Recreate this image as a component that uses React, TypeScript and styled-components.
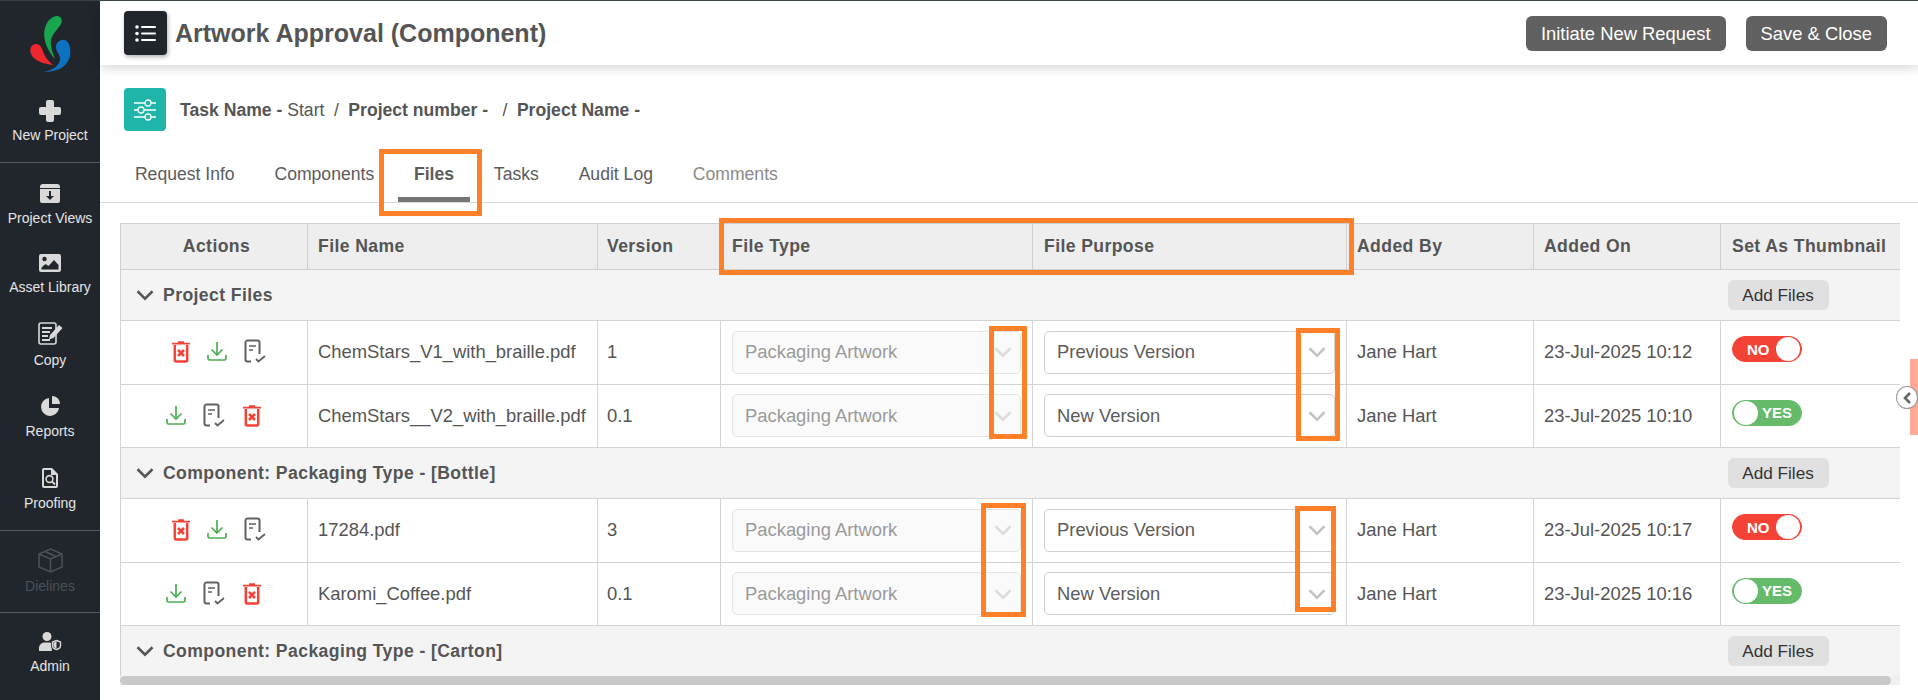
import styled, { createGlobalStyle } from 'styled-components'
import { ReactNode } from 'react'

const GlobalStyle = createGlobalStyle`
  html, body {
    margin: 0;
    padding: 0;
    height: 700px;
    overflow: hidden;
    background: #fff;
    font-family: 'Liberation Sans', Arial, sans-serif;
    color: #555;
  }
  * { box-sizing: border-box; }
`

const Page = styled.div`
  position: relative;
  display: flex;
  width: 1918px;
  height: 700px;
  overflow: hidden;
  border-top: 1px solid #36423f;
`

const Sidebar = styled.aside`
  width: 100px;
  flex: none;
  background: #21262d;
  display: flex;
  flex-direction: column;
  color: #e4e4e4;
`

const LogoWrap = styled.div`
  height: 83px;
  padding-top: 13px;
  display: flex;
  justify-content: center;
`

const NavGroup = styled.div<{ $height: number; $last?: boolean }>`
  height: ${(p) => p.$height}px;
  border-bottom: ${(p) => (p.$last ? 'none' : '1px solid #555a60')};
`

const NavItem = styled.div<{ $height: number; $disabled?: boolean; $gap: number }>`
  height: ${(p) => p.$height}px;
  display: flex;
  flex-direction: column;
  align-items: center;
  justify-content: flex-end;
  font-size: 14px;
  line-height: 16px;
  white-space: nowrap;
  color: ${(p) => (p.$disabled ? '#4c5157' : '#e4e4e4')};

  svg {
    margin-bottom: ${(p) => p.$gap}px;
  }
`

const Main = styled.main`
  flex: 1;
  min-width: 0;
  display: flex;
  flex-direction: column;
`

const TopBar = styled.header`
  height: 64px;
  flex: none;
  display: flex;
  align-items: center;
  padding: 0 31px 0 24px;
  box-shadow: 0 3px 10px rgba(0, 0, 0, 0.16);
  position: relative;
`

const MenuButton = styled.div`
  width: 43px;
  height: 44px;
  border-radius: 4px;
  background: #21262d;
  box-shadow: 1px 2px 4px rgba(0, 0, 0, 0.3);
  display: flex;
  align-items: center;
  justify-content: center;
`

const PageTitle = styled.h1`
  margin: 0 0 0 8px;
  font-size: 25px;
  font-weight: 700;
  color: #555;
  flex: 1;
`

const DarkButton = styled.button`
  height: 35px;
  margin: 1px 0 0 20px;
  padding: 0 15px;
  border: none;
  border-radius: 6px;
  background: #616161;
  color: #fff;
  font-family: inherit;
  font-size: 18.4px;
`

const TaskRow = styled.div`
  display: flex;
  align-items: center;
  margin: 23px 0 0 24px;
  height: 43px;
  font-size: 17.6px;
  color: #555;
`

const TealIcon = styled.div`
  width: 42px;
  height: 43px;
  margin-right: 14px;
  border-radius: 4px;
  background: #1fb5a9;
  display: flex;
  align-items: center;
  justify-content: center;
`

const TaskText = styled.div`
  margin-top: 2px;
  white-space: pre;
`

const Strong = styled.strong`
  font-weight: 700;
`

const Sep = styled.span`
  margin: 0 9.5px;
`

const Tabs = styled.nav`
  height: 72px;
  flex: none;
  display: flex;
  align-items: flex-end;
  padding-left: 15px;
  border-bottom: 1px solid #d8d8d8;
`

const Tab = styled.div<{ $active?: boolean; $muted?: boolean }>`
  position: relative;
  height: 56px;
  padding: 18px 19.9px 0;
  font-size: 17.6px;
  font-weight: ${(p) => (p.$active ? 700 : 400)};
  color: ${(p) => (p.$muted ? '#8a8a8a' : '#5c5c5c')};

  &::after {
    content: '';
    display: ${(p) => (p.$active ? 'block' : 'none')};
    position: absolute;
    left: 4px;
    right: 4px;
    bottom: 0;
    height: 5px;
    background: #757575;
  }
`

const TableBlock = styled.div`
  width: 1780px;
  margin: 20px 0 0 20px;
`

const TableClip = styled.div`
  height: 453px;
  overflow: hidden;
`

const ScrollTrack = styled.div`
  height: 9px;
  background: #efefef;
`

const ScrollThumb = styled.div`
  width: 1771px;
  height: 9px;
  border-radius: 5px;
  background: #c9c9c9;
`

const Table = styled.table`
  width: 1789px;
  table-layout: fixed;
  border-collapse: collapse;
  font-size: 18.4px;
`

const Th = styled.th<{ $center?: boolean; $pad: number }>`
  height: 46px;
  padding: 0 0 0 ${(p) => p.$pad}px;
  background: #eee;
  border: 1px solid #cfcfcf;
  font-size: 17.6px;
  letter-spacing: 0.4px;
  font-weight: 700;
  color: #555;
  white-space: nowrap;
  text-align: ${(p) => (p.$center ? 'center' : 'left')};
`

const GroupCell = styled.td`
  height: 51px;
  padding: 0;
  background: #f4f4f4;
  border-top: 1px solid #d4d4d4;
  border-bottom: 1px solid #d4d4d4;

  &:first-child {
    border-left: 1px solid #cfcfcf;
  }
`

const GroupLabel = styled.div`
  display: flex;
  align-items: center;
  gap: 8px;
  padding-left: 14px;
  font-size: 17.6px;
  letter-spacing: 0.4px;
  font-weight: 700;
  color: #555;
`

const AddButton = styled.button`
  width: 101px;
  height: 30px;
  margin-left: 7px;
  padding: 0;
  border: none;
  border-radius: 6px;
  background: #e0e0e0;
  color: #333;
  font-family: inherit;
  font-size: 17.2px;
  display: block;
`

const Td = styled.td<{ $pad?: number }>`
  height: 63.5px;
  padding: 0 ${(p) => p.$pad ?? 10}px;
  border: 1px solid #d4d4d4;
  color: #555;
  white-space: nowrap;
`

const ActionRow = styled.div<{ $trashLast?: boolean; $shift?: number }>`
  display: flex;
  justify-content: center;
  align-items: center;
  gap: 12.5px;
  margin-left: ${(p) => p.$shift ?? 0}px;
  margin-top: -2px;

  svg:last-child {
    margin-left: ${(p) => (p.$trashLast ? '3px' : '0')};
  }
`

const Select = styled.div<{ $disabled?: boolean }>`
  height: 43px;
  display: flex;
  align-items: center;
  justify-content: space-between;
  padding: 0 7px 0 12px;
  border-radius: 5px;
  border: 1px solid ${(p) => (p.$disabled ? '#e4e4e4' : '#cfcfcf')};
  background: ${(p) => (p.$disabled ? '#fafafa' : '#fff')};
  color: ${(p) => (p.$disabled ? '#9a9a9a' : '#5c5c5c')};
`

const Toggle = styled.div<{ $on: boolean }>`
  width: 70px;
  height: 26px;
  margin: -6px 0 0 1px;
  border-radius: 13px;
  border: 1px solid ${(p) => (p.$on ? '#66bb6a' : '#f44336')};
  background: ${(p) => (p.$on ? '#66bb6a' : '#f44336')};
  color: #fff;
  font-size: 15px;
  font-weight: 700;
  display: flex;
  align-items: center;
  flex-direction: ${(p) => (p.$on ? 'row' : 'row-reverse')};
  justify-content: space-between;
  padding: ${(p) => (p.$on ? '0 9px 0 1px' : '0 1px 0 14px')};

  &::before {
    content: '';
    width: 24px;
    height: 24px;
    border-radius: 50%;
    background: #fff;
  }
`

const Mark = styled.div<{ $x: number; $y: number; $w: number; $h: number }>`
  position: absolute;
  left: ${(p) => p.$x}px;
  top: ${(p) => p.$y - 1}px;
  width: ${(p) => p.$w}px;
  height: ${(p) => p.$h}px;
  border: 5px solid #ff8029;
  pointer-events: none;
`

const SideTab = styled.div`
  position: absolute;
  left: 1910px;
  top: 358px;
  width: 8px;
  height: 76px;
  background: #ffa896;
`

const CollapseKnob = styled.div`
  position: absolute;
  left: 1896px;
  top: 385px;
  width: 22px;
  height: 23px;
  border-radius: 50%;
  border: 1px solid #9a9a9a;
  background: #fff;
  display: flex;
  align-items: center;
  justify-content: center;
`

function Logo() {
  return (
    <svg width="100" height="66" viewBox="0 14 100 66">
      <path fill="#18a74f" d="M55 59C47 50 42 38 45 28C47 20 53 16 57 16C61 16 63 20 61 24C58 29 52 34 51 40C50 47 53 53 55 59Z" />
      <path fill="#f0262f" d="M53 65C44 64 34 61 31 54C29 48 32 44 36 44C41 44 42 49 44 54C46 58 49 62 53 65Z" />
      <path fill="#0f72c0" d="M43 72C52 71 59 66 60 60C61 55 56 52 56 47C56 42 61 39 65 40C70 42 71 50 70 56C68 65 60 72 43 72Z" />
    </svg>
  )
}

const Gray = '#d9d9d9'

const PlusIcon = () => (
  <svg width="22" height="22" viewBox="0 0 22 22">
    <path fill={Gray} d="M9 0h4a2 2 0 0 1 2 2v5h5a2 2 0 0 1 2 2v4a2 2 0 0 1-2 2h-5v5a2 2 0 0 1-2 2H9a2 2 0 0 1-2-2v-5H2a2 2 0 0 1-2-2V9a2 2 0 0 1 2-2h5V2a2 2 0 0 1 2-2Z" />
  </svg>
)

const ArchiveIcon = () => (
  <svg width="20" height="19" viewBox="0 0 20 19">
    <path fill={Gray} d="M3 0h14a3 3 0 0 1 3 3v1H0V3a3 3 0 0 1 3-3ZM0 5h20v12a2 2 0 0 1-2 2H2a2 2 0 0 1-2-2Z" />
    <path fill="#21262d" d="M9 7h2v5h3l-4 4-4-4h3Z" />
  </svg>
)

const ImageIcon = () => (
  <svg width="22" height="18" viewBox="0 0 22 18">
    <rect width="22" height="18" rx="2" fill={Gray} />
    <circle cx="5.5" cy="5" r="2.2" fill="#21262d" />
    <path fill="#21262d" d="M2.5 15.5v-2l4-3.5 3 2 5.5-6 4.5 5v4.5Z" />
  </svg>
)

const CopyIcon = () => (
  <svg width="25" height="23" viewBox="0 0 25 23" fill="none" stroke={Gray}>
    <rect x="1" y="1" width="17" height="21" rx="2" strokeWidth="1.6" />
    <path strokeWidth="1.8" d="M4 6h10M4 10h8M4 14h6M4 18h8" />
    <path fill={Gray} stroke="none" d="M21 3l3.5 3-9 10-4.5 1.5 1-4.5Z" />
  </svg>
)

const PieIcon = () => (
  <svg width="20" height="20" viewBox="0 0 20 20">
    <path fill={Gray} d="M9 2v10h10a9 9 0 1 1-10-10Z" />
    <path fill={Gray} d="M12 0a8 8 0 0 1 8 8h-8Z" />
  </svg>
)

const ProofIcon = () => (
  <svg width="16" height="20" viewBox="0 0 16 20">
    <path fill={Gray} d="M2 0h8l6 6v12a2 2 0 0 1-2 2H2a2 2 0 0 1-2-2V2a2 2 0 0 1 2-2Z" />
    <path fill="#21262d" d="M2 2h7v5h5v11H2Z" />
    <circle cx="7.5" cy="11" r="3.4" fill="none" stroke={Gray} strokeWidth="1.6" />
    <path stroke={Gray} strokeWidth="1.8" d="M10 13.5l3 3" />
  </svg>
)

const BoxIcon = () => (
  <svg width="25" height="25" viewBox="0 0 25 25" fill="none" stroke="#4c5157" strokeWidth="1.5">
    <path d="M12.5 1L24 6v13l-11.5 5L1 19V6Z" />
    <path d="M1 6l11.5 5L24 6M12.5 11v13M7 3.5l11 5" />
  </svg>
)

const AdminIcon = () => (
  <svg width="23" height="19" viewBox="0 0 23 19">
    <circle cx="8" cy="4.5" r="4.5" fill={Gray} />
    <path fill={Gray} d="M0 19v-3c0-3.5 3-5.500 6-5.500h4c1 0 2 .2 2.800.6V19Z" />
    <path fill="#21262d" d="M17.500 7L23 9v4.500c0 3-2.500 5-5.500 5.500-3-.5-5.500-2.500-5.500-5.500V9Z" />
    <path fill="none" stroke={Gray} strokeWidth="1.400" d="M17.500 8.500l4 1.500v3.500c0 2-1.700 3.500-4 4-2.300-.5-4-2-4-4V10Z" />
    <path fill={Gray} d="M17.500 9.500v7c-1.800-.5-3-1.600-3-3v-2.800Z" />
  </svg>
)

const ListIcon = () => (
  <svg width="22" height="17" viewBox="0 0 22 17" fill="#fff">
    <circle cx="2" cy="2" r="1.8" />
    <circle cx="2" cy="8.500" r="1.8" />
    <circle cx="2" cy="15" r="1.8" />
    <rect x="6" y="1" width="15" height="2" rx="1" />
    <rect x="6" y="7.500" width="15" height="2" rx="1" />
    <rect x="6" y="14" width="15" height="2" rx="1" />
  </svg>
)

const SlidersIcon = () => (
  <svg width="24" height="22" viewBox="0 0 24 22" fill="none" stroke="#fff" strokeWidth="1.300">
    <path d="M1 4h11M18 4h5M1 11h4M11 11h12M1 18h11M18 18h5" />
    <circle cx="15" cy="4" r="3" />
    <circle cx="8" cy="11" r="3" />
    <circle cx="15" cy="18" r="3" />
  </svg>
)

const TrashIcon = () => (
  <svg width="24" height="24" viewBox="0 0 24 24">
    <path fill="#f44336" d="M3 3.800h18v1.800H3ZM9 2.300h6v1.500H9Z" />
    <path fill="none" stroke="#f44336" strokeWidth="2.500" d="M5.800 6v15a1.500 1.500 0 0 0 1.500 1.500h9.400a1.500 1.500 0 0 0 1.500-1.500V6" />
    <path fill="none" stroke="#f44336" strokeWidth="2.600" d="M9 11l6 6M15 11l-6 6" />
  </svg>
)

const DownloadIcon = () => (
  <svg width="24" height="24" viewBox="0 0 24 24" fill="none" stroke="#4caf50" strokeWidth="1.700">
    <path d="M12 3v13M6.500 10.500L12 16l5.500-5.500" />
    <path d="M3 16v3.500A1.500 1.500 0 0 0 4.500 21h15a1.500 1.500 0 0 0 1.500-1.500V16" />
  </svg>
)

const ReviewIcon = () => (
  <svg width="24" height="24" viewBox="0 0 24 24" fill="none" stroke="#616161" strokeWidth="2">
    <path d="M9 22.500H5.500a2 2 0 0 1-2-2V3.500a2 2 0 0 1 2-2h10a2 2 0 0 1 2 2V15" />
    <path strokeWidth="1.600" d="M7 7h7M7 11h4" />
    <path strokeWidth="1.800" d="M14 20l2.500 2.500L23 17" />
  </svg>
)

const Chevron = ({ color = '#555', size = 20 }: { color?: string; size?: number }) => (
  <svg width={size} height={size} viewBox="0 0 16 16" fill="none" stroke={color} strokeWidth="2">
    <path d="M2 5l6 6 6-6" />
  </svg>
)

const columns = [
  { title: 'Actions', width: 187, pad: 5, center: true },
  { title: 'File Name', width: 290, pad: 10 },
  { title: 'Version', width: 123, pad: 9 },
  { title: 'File Type', width: 312, pad: 11 },
  { title: 'File Purpose', width: 314, pad: 11 },
  { title: 'Added By', width: 187, pad: 10 },
  { title: 'Added On', width: 187, pad: 10 },
  { title: 'Set As Thumbnail', width: 189, pad: 11 },
]

interface FileRow {
  name: string
  version: string
  purpose: string
  date: string
  thumb: boolean
}

const groups: { label: string; rows: FileRow[] }[] = [
  {
    label: 'Project Files',
    rows: [
      { name: 'ChemStars_V1_with_braille.pdf', version: '1', purpose: 'Previous Version', date: '23-Jul-2025 10:12', thumb: false },
      { name: 'ChemStars__V2_with_braille.pdf', version: '0.1', purpose: 'New Version', date: '23-Jul-2025 10:10', thumb: true },
    ],
  },
  {
    label: 'Component: Packaging Type - [Bottle]',
    rows: [
      { name: '17284.pdf', version: '3', purpose: 'Previous Version', date: '23-Jul-2025 10:17', thumb: false },
      { name: 'Karomi_Coffee.pdf', version: '0.1', purpose: 'New Version', date: '23-Jul-2025 10:16', thumb: true },
    ],
  },
  { label: 'Component: Packaging Type - [Carton]', rows: [] },
]

const marks = [
  { x: 379, y: 149, w: 103, h: 67 },
  { x: 719, y: 218, w: 635, h: 57 },
  { x: 989, y: 326, w: 38, h: 113 },
  { x: 1296, y: 328, w: 44, h: 113 },
  { x: 981, y: 503, w: 45, h: 114 },
  { x: 1295, y: 506, w: 41, h: 106 },
]

function Nav({ icon, label, height, gap = 7, disabled }: { icon: ReactNode; label: string; height: number; gap?: number; disabled?: boolean }) {
  return (
    <NavItem $height={height} $gap={gap} $disabled={disabled}>
      {icon}
      {label}
    </NavItem>
  )
}

export default function App() {
  return (
    <>
      <GlobalStyle />
      <Page>
        <Sidebar>
          <LogoWrap>
            <Logo />
          </LogoWrap>
          <NavGroup $height={79}>
            <Nav icon={<PlusIcon />} label="New Project" height={59} gap={5} />
          </NavGroup>
          <NavGroup $height={368}>
            <Nav icon={<ArchiveIcon />} label="Project Views" height={63} />
            <Nav icon={<ImageIcon />} label="Asset Library" height={69} />
            <Nav icon={<CopyIcon />} label="Copy" height={73} />
            <Nav icon={<PieIcon />} label="Reports" height={71} />
            <Nav icon={<ProofIcon />} label="Proofing" height={72} />
          </NavGroup>
          <NavGroup $height={82}>
            <Nav icon={<BoxIcon />} label="Dielines" height={63} gap={5} disabled />
          </NavGroup>
          <NavGroup $height={80} $last>
            <Nav icon={<AdminIcon />} label="Admin" height={61} />
          </NavGroup>
        </Sidebar>
        <Main>
          <TopBar>
            <MenuButton>
              <ListIcon />
            </MenuButton>
            <PageTitle>Artwork Approval (Component)</PageTitle>
            <DarkButton>Initiate New Request</DarkButton>
            <DarkButton>Save &amp; Close</DarkButton>
          </TopBar>
          <TaskRow>
            <TealIcon>
              <SlidersIcon />
            </TealIcon>
            <TaskText>
              <Strong>Task Name - </Strong>Start
              <Sep>/</Sep>
              <Strong>Project number -</Strong>
              <Sep> /</Sep>
              <Strong>Project Name -</Strong>
            </TaskText>
          </TaskRow>
          <Tabs>
            <Tab>Request Info</Tab>
            <Tab>Components</Tab>
            <Tab $active>Files</Tab>
            <Tab>Tasks</Tab>
            <Tab>Audit Log</Tab>
            <Tab $muted>Comments</Tab>
          </Tabs>
          <TableBlock>
            <TableClip>
              <Table>
                <colgroup>
                  {columns.map((c) => (
                    <col key={c.title} width={c.width} />
                  ))}
                </colgroup>
                <thead>
                  <tr>
                    {columns.map((c) => (
                      <Th key={c.title} $center={c.center} $pad={c.pad}>
                        {c.title}
                      </Th>
                    ))}
                  </tr>
                </thead>
                <tbody>
                  {groups.map((g) => (
                    <FileGroup key={g.label} label={g.label} rows={g.rows} />
                  ))}
                </tbody>
              </Table>
            </TableClip>
            <ScrollTrack>
              <ScrollThumb />
            </ScrollTrack>
          </TableBlock>
        </Main>
        {marks.map((m) => (
          <Mark key={`${m.x}-${m.y}`} $x={m.x} $y={m.y} $w={m.w} $h={m.h} />
        ))}
        <SideTab />
        <CollapseKnob>
          <svg width="10" height="12" viewBox="0 0 10 12" fill="none" stroke="#666" strokeWidth="2.600">
            <path d="M8 1L3 6l5 5" />
          </svg>
        </CollapseKnob>
      </Page>
    </>
  )
}

function FileGroup({ label, rows }: { label: string; rows: FileRow[] }) {
  return (
    <>
      <tr>
        <GroupCell colSpan={7}>
          <GroupLabel>
            <Chevron />
            {label}
          </GroupLabel>
        </GroupCell>
        <GroupCell>
          <AddButton>Add Files</AddButton>
        </GroupCell>
      </tr>
      {rows.map((r) => (
        <tr key={r.name}>
          <Td>
            {r.thumb ? (
              <ActionRow $trashLast>
                <DownloadIcon />
                <ReviewIcon />
                <TrashIcon />
              </ActionRow>
            ) : (
              <ActionRow $shift={6}>
                <TrashIcon />
                <DownloadIcon />
                <ReviewIcon />
              </ActionRow>
            )}
          </Td>
          <Td>{r.name}</Td>
          <Td $pad={9}>{r.version}</Td>
          <Td $pad={11}>
            <Select $disabled>
              Packaging Artwork
              <Chevron color="#dcdcdc" />
            </Select>
          </Td>
          <Td $pad={11}>
            <Select>
              {r.purpose}
              <Chevron color="#c4c4c4" />
            </Select>
          </Td>
          <Td>Jane Hart</Td>
          <Td>{r.date}</Td>
          <Td>
            <Toggle $on={r.thumb}>{r.thumb ? 'YES' : 'NO'}</Toggle>
          </Td>
        </tr>
      ))}
    </>
  )
}
